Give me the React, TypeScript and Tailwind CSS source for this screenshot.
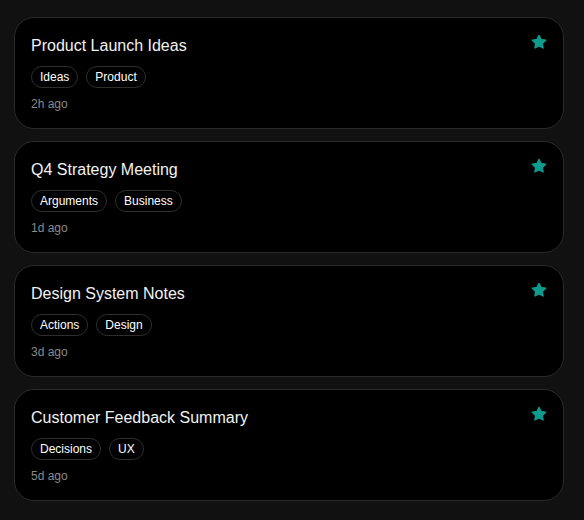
import React from "react";

type Note = { title: string; tags: string[]; time: string };

const notes: Note[] = [
  { title: "Product Launch Ideas", tags: ["Ideas", "Product"], time: "2h ago" },
  { title: "Q4 Strategy Meeting", tags: ["Arguments", "Business"], time: "1d ago" },
  { title: "Design System Notes", tags: ["Actions", "Design"], time: "3d ago" },
  { title: "Customer Feedback Summary", tags: ["Decisions", "UX"], time: "5d ago" },
];

function StarIcon() {
  return (
    <svg width="16" height="16" viewBox="0 0 24 24" fill="#0f9a8e" stroke="#0f9a8e" strokeWidth="2" strokeLinejoin="round">
      <path d="M12 2l3.09 6.26L22 9.27l-5 4.87 1.18 6.88L12 17.77l-6.18 3.25L7 14.14 2 9.27l6.91-1.01L12 2z" />
    </svg>
  );
}

export default function App() {
  return (
    <div
      className="min-h-[520px] w-[584px] bg-[#111111] pl-[14px] pt-[17px]"
      style={{ fontFamily: '"Liberation Sans", Arial, sans-serif' }}
    >
      <div className="flex w-[550px] flex-col gap-3">
        {notes.map((n) => (
          <div key={n.title} className="flex rounded-[20px] border border-[#2a2a2a] bg-black p-4">
            <div className="flex-1">
              <div className="text-base leading-6 text-[#f2f2f2]">{n.title}</div>
              <div className="mt-2 flex gap-2">
                {n.tags.map((t) => (
                  <span
                    key={t}
                    className="rounded-full border border-[#2e2e2e] px-2 py-[2px] text-xs leading-4 text-white"
                  >
                    {t}
                  </span>
                ))}
              </div>
              <div className="mt-2 text-xs leading-4 text-[#8a8a8a]">{n.time}</div>
            </div>
            <div className="flex-none">
              <StarIcon />
            </div>
          </div>
        ))}
      </div>
    </div>
  );
}
